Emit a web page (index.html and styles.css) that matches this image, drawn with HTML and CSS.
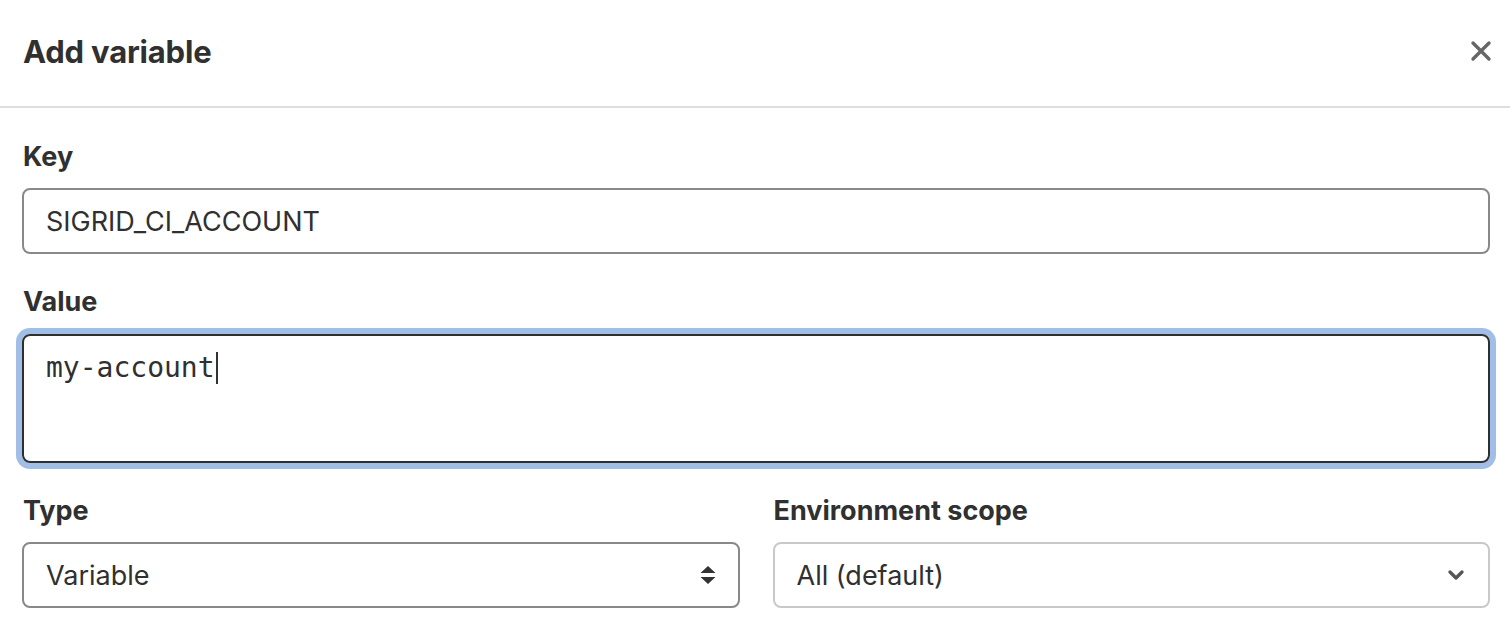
FILE: index.html
```html
<!DOCTYPE html>
<html lang="en">
<head>
<meta charset="utf-8">
<title>Add variable</title>
<link rel="stylesheet" href="styles.css">
</head>
<body>
<div class="modal">
  <header class="modal-header">
    <h1 class="modal-title">Add variable</h1>
    <button class="close" type="button" aria-label="Close">
      <svg width="22" height="22" viewBox="0 0 22 22"><path d="M3 3 L19 19 M19 3 L3 19" stroke="#666" stroke-width="3.4" stroke-linecap="round"/></svg>
    </button>
  </header>
  <form class="modal-body">
    <div class="group">
      <label class="label">Key</label>
      <div class="input">SIGRID_CI_ACCOUNT</div>
    </div>
    <div class="group">
      <label class="label">Value</label>
      <div class="textarea"><span class="mono">my-account</span><span class="caret"></span></div>
    </div>
    <div class="row">
      <div class="group col">
        <label class="label">Type</label>
        <div class="select">
          <span>Variable</span>
          <svg class="updown" width="16" height="20" viewBox="0 0 16 20"><path d="M8 1 L15.5 8 H0.5 Z M8 19 L15.5 12 H0.5 Z" fill="#333"/></svg>
        </div>
      </div>
      <div class="group col">
        <label class="label">Environment scope</label>
        <div class="select light">
          <span>All (default)</span>
          <svg class="chev" width="16" height="12" viewBox="0 0 16 12"><path d="M2 3 L8 9 L14 3" fill="none" stroke="#555" stroke-width="3.2" stroke-linecap="round" stroke-linejoin="round"/></svg>
        </div>
      </div>
    </div>
  </form>
</div>
</body>
</html>
```

FILE: styles.css
```css
* { box-sizing: border-box; }
html, body { margin: 0; padding: 0; background: #fff; }
body {
  font-family: Inter, "Liberation Sans", Arial, sans-serif;
  color: #303030;
}
.modal-header {
  height: 108px;
  border-bottom: 2px solid #dedede;
  display: flex;
  align-items: center;
  justify-content: space-between;
  padding: 0 18px 4px 23px;
}
.modal-title {
  margin: 0;
  font-size: 31px;
  font-weight: 700;
  letter-spacing: -0.2px;
}
.close {
  border: 0;
  background: transparent;
  padding: 0;
  width: 22px;
  height: 22px;
  display: flex;
}
.modal-body {
  padding: 33px 20px 0 22px;
  display: flex;
  flex-direction: column;
  gap: 32px;
}
.group { display: flex; flex-direction: column; }
.label {
  font-size: 27px;
  font-weight: 700;
  line-height: 32px;
  margin: 0 0 15px 1px;
}
.input, .select {
  height: 66px;
  border: 2px solid #898989;
  border-radius: 8px;
  padding: 0 22px;
  display: flex;
  align-items: center;
  font-size: 27px;
  color: #303030;
}
.group + .group .textarea { margin-top: 1px; }
.textarea {
  height: 129px;
  border: 2px solid #2f2f2f;
  border-radius: 8px;
  box-shadow: 0 0 0 6px #a1bfe6;
  padding: 14px 22px;
  display: flex;
  align-items: flex-start;
}
.mono {
  font-family: "DejaVu Sans Mono", "Liberation Mono", monospace;
  font-size: 28px;
  line-height: 36px;
  color: #303030;
}
.caret {
  display: inline-block;
  width: 2px;
  height: 32px;
  background: #333;
  margin-top: 2px;
  margin-left: 1px;
}
.row {
  display: flex;
  gap: 33px;
}
.col { flex: 1; }
.select {
  justify-content: space-between;
  padding-right: 22px;
}
.select.light { border-color: #c9c9c9; }
.updown { margin-right: 0; }
.chev { margin-right: 2px; }
```
